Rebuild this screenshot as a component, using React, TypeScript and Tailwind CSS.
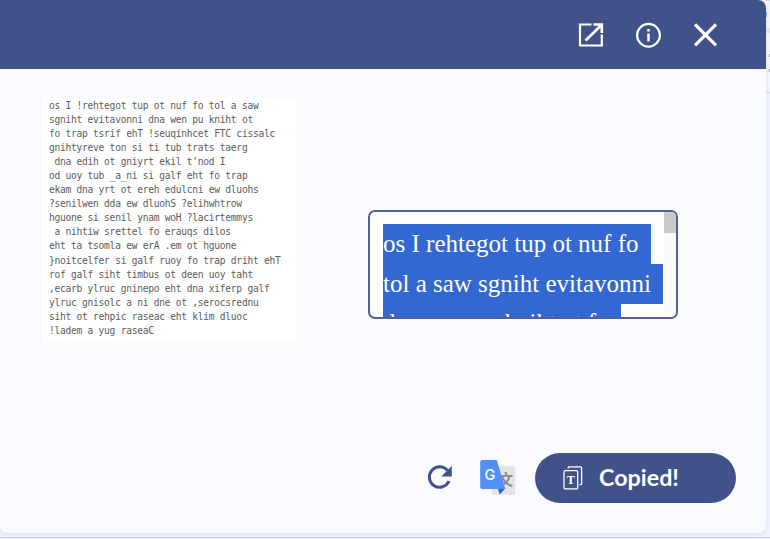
const imageLines = [
  "os I !rehtegot tup ot nuf fo tol a saw",
  "sgniht evitavonni dna wen pu kniht ot",
  "fo trap tsrif ehT !seuqinhcet FTC cissalc",
  "gnihtyreve ton si ti tub trats taerg",
  " dna edih ot gniyrt ekil t'nod I",
  "od uoy tub _a_ni si galf eht fo trap",
  "ekam dna yrt ot ereh edulcni ew dluohs",
  "?senilwen dda ew dluohS ?elihwhtrow",
  "hguone si senil ynam woH ?lacirtemmys",
  " a nihtiw srettel fo erauqs dilos",
  "eht ta tsomla ew erA .em ot hguone",
  "}noitcelfer si galf ruoy fo trap driht ehT",
  "rof galf siht timbus ot deen uoy taht",
  ",ecarb ylruc gninepo eht dna xiferp galf",
  "ylruc gnisolc a ni dne ot ,serocsrednu",
  "siht ot rehpic raseac eht klim dluoc",
  "!ladem a yug raseaC",
];

function Header() {
  return (
    <header className="flex h-[69px] shrink-0 items-center gap-[30px] rounded-tr-lg bg-[#41518a] pl-[576px] text-white">
      <button aria-label="Open in new tab" className="h-[28px] w-[28px]">
        <svg width="28" height="28" viewBox="0 0 28 28" fill="none" stroke="currentColor" strokeWidth="2.2">
          <path d="M15.5 3.5H4v21h21.8V13.5" />
          <path d="M17.5 3.5h8.3v8.5M25.5 4 9.5 19.5" strokeWidth="2.7" />
        </svg>
      </button>
      <button aria-label="Information" className="h-[28px] w-[28px]">
        <svg width="28" height="28" viewBox="0 0 28 28" fill="none" stroke="currentColor" strokeWidth="2.1">
          <circle cx="14.5" cy="14.3" r="11.4" />
          <path d="M14.5 12.5v8M14.5 8v2.4" strokeWidth="2.5" />
        </svg>
      </button>
      <button aria-label="Close" className="h-[28px] w-[28px]">
        <svg width="28" height="28" viewBox="0 0 28 28" fill="none" stroke="currentColor" strokeWidth="3.2">
          <path d="M3 3.3 24 24.3M24 3.3 3 24.3" />
        </svg>
      </button>
    </header>
  );
}

function SourceImage() {
  return (
    <div className="mt-[29px] ml-[42px] h-[244px] w-[255px] shrink-0 bg-white pt-[1px] pl-[7px] font-['DejaVu_Sans_Mono',monospace] text-[9.6px] leading-[14.05px] tracking-[-0.265px] whitespace-pre text-[#5c5c5c]">
      {imageLines.map((line) => (
        <div key={line}>{line}</div>
      ))}
    </div>
  );
}

function ResultText() {
  return (
    <div className="mt-[141px] ml-[71px] flex h-[109px] w-[310px] overflow-hidden rounded-[7px] border-2 border-[#52619b] bg-white">
      <div className="flex flex-1 flex-col items-start pt-[12px] pl-[13px] font-['Liberation_Serif',serif] text-[25px] leading-[40px] whitespace-nowrap text-white">
        <span className="h-10 w-[268px] shrink-0 bg-[#3367d1]">os I rehtegot tup ot nuf fo</span>
        <span className="h-10 w-[280px] shrink-0 bg-[#3367d1]">tol a saw sgniht evitavonni</span>
        <span className="h-10 w-[238px] shrink-0 bg-[#3367d1] leading-[38px]">dna wen pu kniht ot fo</span>
      </div>
      <div className="w-[12px] shrink-0 bg-[#fafafa]">
        <div className="h-[21px] bg-[#c9c9c9]" />
      </div>
    </div>
  );
}

function RefreshIcon() {
  return (
    <svg width="26" height="26" viewBox="0 0 26 26" fill="none">
      <path d="M20.5 5.6A10.2 10.2 0 1 0 22 16" stroke="#41518a" strokeWidth="3" />
      <path d="M24.8 1v10.5H14.2z" fill="#41518a" />
    </svg>
  );
}

function TranslateIcon() {
  return (
    <svg width="36" height="36" viewBox="0 0 36 36">
      <rect x="12" y="6" width="23.2" height="28.8" rx="2" fill="#e4e4e4" />
      <text x="18.4" y="25" fontSize="14.5" fontWeight="700" fill="#8c8c8c" fontFamily="'Noto Sans CJK SC', sans-serif">文</text>
      <path d="M17.8 28.3h7.6l-5.6 6.3z" fill="#2d60c7" />
      <path d="M2.4 0H16.8l8.6 29H2.4A2.2 2.2 0 0 1 .2 26.8V2.2A2.2 2.2 0 0 1 2.4 0z" fill="#518ff5" />
      <text x="4.4" y="19.5" fontSize="14.5" fontWeight="500" fill="#fff" fontFamily="Inter, sans-serif">G</text>
    </svg>
  );
}

function CopyIcon() {
  return (
    <svg width="20" height="24" viewBox="0 0 20 24" fill="none" stroke="#fff" strokeWidth="1.3">
      <rect x="1" y="4.7" width="13.7" height="18.2" rx="1.2" />
      <path d="M5.2 2.4V1.9Q5.2.8 6.4.8h11q1.2 0 1.2 1.2v15.5q0 1.2-1.2 1.2h-.8" />
      <text x="7.85" y="18" textAnchor="middle" fontSize="12" fontWeight="700" fill="#fff" stroke="none" fontFamily="'Liberation Serif', serif">T</text>
    </svg>
  );
}

export default function App() {
  return (
    <div className="relative h-[539px] w-[770px] overflow-hidden bg-[#f0f1fe]">
      <div className="absolute inset-x-0 top-[537px] h-px bg-[#ccd0e4]" />
      <div className="absolute top-0 left-[766px] h-[93px] w-1 border-y border-[#d4d7e4] bg-[#f3f4fd]">
        <div className="mt-[11px] h-[5px] w-px bg-[#78b9ef]" />
        <div className="mt-[11px] h-[5px] bg-[#e2e4ed]" />
        <div className="mt-[21px] ml-[3px] h-[3px] bg-[#a5a7b0]" />
        <div className="mt-[12px] ml-[3px] h-[3px] bg-[#a5a7b0]" />
      </div>
      <div className="relative flex h-[533px] w-[766px] flex-col rounded-lg bg-[#fafbfe] shadow-[0_1px_5px_rgba(90,110,220,0.12)]">
        <Header />
        <main className="flex items-start">
          <SourceImage />
          <ResultText />
        </main>
        <footer className="mt-auto mr-[30px] mb-[30px] flex h-[50px] items-center justify-end">
          <button aria-label="Retry" className="mr-[27px]"><RefreshIcon /></button>
          <button aria-label="Translate" className="mt-[-1px] mr-[19px]"><TranslateIcon /></button>
          <button className="flex h-[50px] w-[201px] items-center rounded-full bg-[#41518a] pl-[28px] font-['Lato',sans-serif] text-[23.3px] font-bold text-white">
            <CopyIcon />
            <span className="ml-[16px] pb-[2px]">Copied!</span>
          </button>
        </footer>
      </div>
    </div>
  );
}
